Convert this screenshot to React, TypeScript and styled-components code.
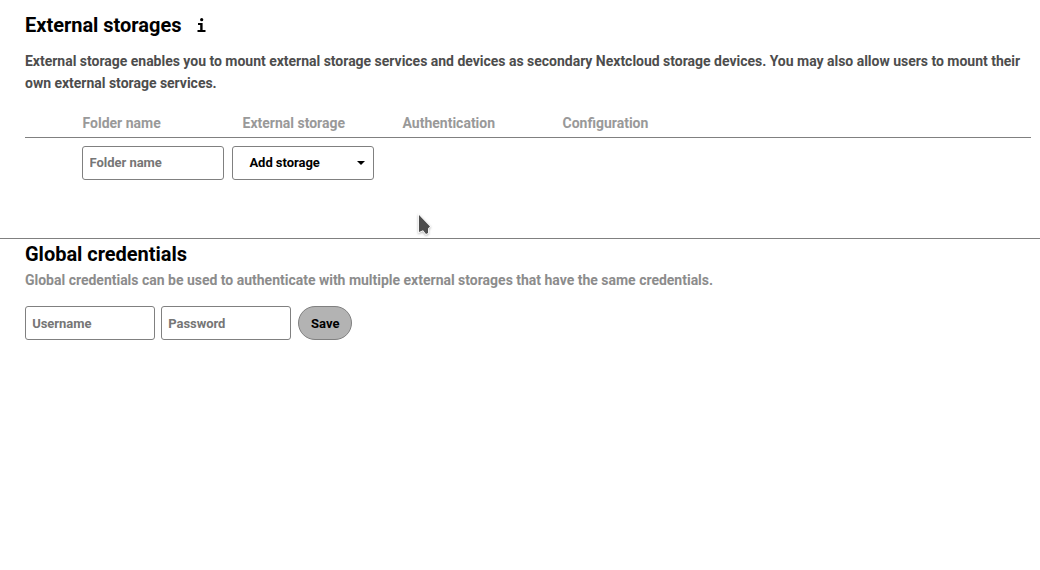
import React from 'react';
import styled, { createGlobalStyle } from 'styled-components';

const GlobalStyle = createGlobalStyle`
  *, *::before, *::after { box-sizing: border-box; }
  body {
    margin: 0;
    background: #fff;
    color: #000;
    font: 700 14px/22px Roboto, "Liberation Sans", sans-serif;
  }
`;

const Page = styled.main`
  height: 570px;
  overflow: hidden;
`;

const StorageSection = styled.section`
  height: 239px;
  padding: 10px 9px 0 25px;
  border-bottom: 1px solid #808080;
`;

const CredentialsSection = styled.section`
  padding: 0 25px;
`;

const Heading = styled.h2`
  margin: 0;
  font-size: 20px;
  line-height: 30px;
  font-weight: 700;
  letter-spacing: -0.02px;
  white-space: nowrap;
`;

const HeadingRow = styled.div`
  display: flex;
  align-items: center;
  gap: 16px;
`;

const InfoIcon = styled.svg`
  display: block;
  width: 9px;
  height: 16px;
`;

const Description = styled.p`
  margin: 10px 0 0;
  color: #4d4d4d;
  letter-spacing: -0.016px;
`;

const Hint = styled.p`
  margin: 0;
  color: #8c8c8c;
  letter-spacing: -0.01px;
`;

const HeaderRow = styled.div`
  display: grid;
  grid-template-columns: 160px 160px 160px 1fr;
  margin-top: 18px;
  height: 26px;
  padding-left: 57.5px;
  border-bottom: 1px solid #808080;
  color: #999;
`;

const FieldRow = styled.div`
  display: flex;
  gap: 8px;
  padding: 8px 0 0 57px;
`;

const CredentialForm = styled.form`
  display: flex;
  gap: 6px;
  margin-top: 15px;
`;

const Input = styled.input<{ $width: number; $raised?: boolean }>`
  width: ${({ $width }) => $width}px;
  height: 34px;
  padding: ${({ $raised }) => ($raised ? '0 6.5px 2px' : '0 6.2px')};
  border: 1px solid #808080;
  border-radius: 3px;
  background: #fff;
  outline: 0;
  font: 700 13px/20px Roboto, sans-serif;
  letter-spacing: -0.03px;
  &::placeholder { color: #767676; opacity: 1; }
`;

const StorageSelect = styled.button`
  display: flex;
  align-items: center;
  justify-content: space-between;
  width: 142px;
  height: 34px;
  padding: 0 8px 0 16.4px;
  border: 1px solid #808080;
  border-radius: 3px;
  background: #fff;
  color: #000;
  font: 700 13px/20px Roboto, sans-serif;
  letter-spacing: -0.03px;
`;

const Caret = styled.svg`
  width: 8px;
  height: 4px;
`;

const SaveButton = styled.button`
  width: 54px;
  height: 34px;
  margin-left: 1px;
  padding: 2px 0 0 0.6px;
  border: 1px solid #808080;
  border-radius: 17px;
  background: #b3b3b3;
  color: #000;
  font: 700 13px/20px Roboto, sans-serif;
`;

const Pointer = styled.svg`
  position: absolute;
  left: 415px;
  top: 212px;
  width: 18px;
  height: 26px;
  filter: drop-shadow(0 1px 1px rgba(0, 0, 0, 0.3));
`;

const columns = ['Folder name', 'External storage', 'Authentication', 'Configuration'];

export default function App() {
  return (
    <Page>
      <GlobalStyle />
      <StorageSection>
        <HeadingRow>
          <Heading>External storages</Heading>
          <InfoIcon viewBox="0 0 9 16" aria-label="Information">
            <circle cx="4.7" cy="2.7" r="1.6" />
            <path d="M1 6h4.6v7h2.9v2H.5v-2h2.7V8H1z" />
          </InfoIcon>
        </HeadingRow>
        <Description>
          External storage enables you to mount external storage services and devices as secondary
          Nextcloud storage devices. You may also allow users to mount their own external storage
          services.
        </Description>
        <HeaderRow>
          {columns.map((name) => <span key={name}>{name}</span>)}
        </HeaderRow>
        <FieldRow>
          <Input $width={142} $raised placeholder="Folder name" />
          <StorageSelect type="button">
            Add storage
            <Caret viewBox="0 0 8 4"><path d="M0 0h8L4 4z" /></Caret>
          </StorageSelect>
        </FieldRow>
      </StorageSection>
      <CredentialsSection>
        <Heading>Global credentials</Heading>
        <Hint>
          Global credentials can be used to authenticate with multiple external storages that have
          the same credentials.
        </Hint>
        <CredentialForm>
          <Input $width={130} placeholder="Username" />
          <Input $width={130} placeholder="Password" />
          <SaveButton type="button">Save</SaveButton>
        </CredentialForm>
      </CredentialsSection>
      <Pointer viewBox="0 0 18 26" aria-hidden="true">
        <path d="M4 3v17l4-1.7 3 3.7 2-1v-4.5l2-2z" fill="#4d4d4d" stroke="#fff" strokeWidth="1.5" paintOrder="stroke" />
      </Pointer>
    </Page>
  );
}
